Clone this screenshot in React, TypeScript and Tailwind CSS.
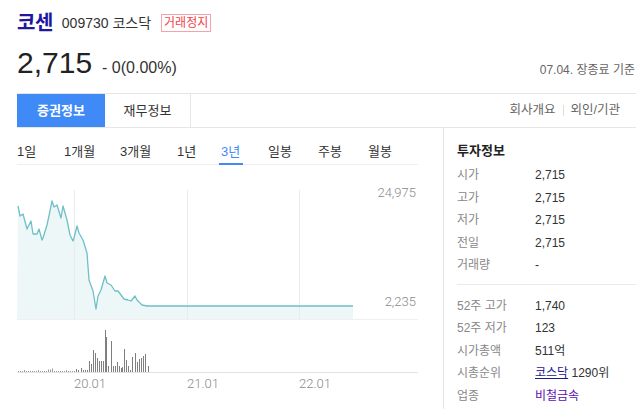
import React from 'react';

const linePts: [number, number][] = [
  [18, 208], [20, 218], [23, 216], [27, 231], [31, 223], [33, 236], [37, 236], [39, 231],
  [42, 242], [43, 240], [47, 227], [50, 213], [52, 203], [54, 209], [57, 207], [61, 220],
  [63, 208], [67, 222], [70, 237], [73, 243], [74, 240], [77, 228], [79, 235], [83, 242],
  [87, 255], [89, 282], [93, 293], [96, 311], [98, 298], [101, 292], [105, 278], [107, 285],
  [111, 287], [115, 293], [118, 293], [124, 301], [128, 302], [131, 303], [135, 298],
  [137, 302], [142, 307], [147, 308], [353, 308],
];

// x, height (zoomed reference / 3)
const volBars: [number, number][] = [
  [76, 3], [78, 2], [81, 4], [83, 2], [85, 2], [87, 2], [89, 11], [91, 8], [93, 22], [95, 19],
  [97, 14], [99, 11], [101, 11], [103, 11], [105, 42], [106, 35], [108, 6], [111, 31], [113, 6],
  [115, 6], [117, 10], [119, 6], [121, 4], [122, 5], [124, 23], [126, 12], [128, 6], [130, 2],
  [132, 15], [135, 19], [137, 10], [139, 13], [141, 14], [143, 16], [145, 18], [148, 6],
];

const tinyBars: number[] = [];
for (let x = 18; x < 75; x += 2) tinyBars.push(x);

const periods = [
  { label: '1일', cls: 'w-[47px]' },
  { label: '1개월', cls: 'w-[56px]' },
  { label: '3개월', cls: 'w-[57px]' },
  { label: '1년', cls: 'w-[44px]' },
  { label: '3년', cls: 'w-[47px]', active: true },
  { label: '일봉', cls: 'w-[50px]' },
  { label: '주봉', cls: 'w-[50px]' },
  { label: '월봉', cls: 'w-[50px]' },
];

function Chart() {
  const line = linePts.map(([x, y]) => `${x},${y}`).join(' ');
  const area = `17,321 ${line} 353,321`;
  return (
    <svg width={443} height={243} viewBox="0 167 443 243" className="block">
      <polygon points={area} fill="#eef7f7" />
      {[74, 187, 299].map((x) => (
        <line key={x} x1={x + 0.5} y1={192} x2={x + 0.5} y2={321} stroke="#e6eded" strokeWidth={1} />
      ))}
      <polyline points={line} fill="none" stroke="#6fbfc8" strokeWidth={1.3} strokeLinejoin="round" />
      <line x1={17} y1={321.5} x2={418} y2={321.5} stroke="#f0f0f0" />
      <text x={416} y={199} textAnchor="end" fontSize={13} fill="#8a8a8a" fontFamily="Roboto, sans-serif" fontWeight={300}>24,975</text>
      <text x={416} y={308} textAnchor="end" fontSize={13} fill="#8a8a8a" fontFamily="Roboto, sans-serif" fontWeight={300}>2,235</text>
      {tinyBars.map((x, i) => (
        <line key={'t' + x} x1={x + 0.5} y1={374} x2={x + 0.5} y2={374 - (i % 7 === 3 ? 2 : 1) - (x > 46 && x < 54 ? 1.5 : 0)} stroke="#9a9a9a" />
      ))}
      {volBars.map(([x, h]) => (
        <line key={'v' + x} x1={x + 0.5} y1={374} x2={x + 0.5} y2={374 - h} stroke="#7f7f7f" />
      ))}
      <line x1={17} y1={374.5} x2={418} y2={374.5} stroke="#e2e2e2" />
      {[
        [74, '20.01'],
        [187, '21.01'],
        [299, '22.01'],
      ].map(([x, t]) => (
        <text key={t as string} x={x as number} y={390} fontSize={13} fill="#8a8a8a" fontFamily="Roboto, sans-serif" fontWeight={300}>
          {t}
        </text>
      ))}
    </svg>
  );
}

function InfoRow({ label, children }: { label: string; children: React.ReactNode }) {
  return (
    <div className="flex h-[22.5px] items-center text-[12px]">
      <span className="w-[78px] text-[#888]">{label}</span>
      <span className="text-[#333]">{children}</span>
    </div>
  );
}

export default function App() {
  return (
    <div
      className="w-[636px] h-[410px] overflow-hidden bg-white text-[#333]"
      style={{ fontFamily: '"Liberation Sans", "Noto Sans CJK KR", sans-serif' }}
    >
      {/* 종목 헤더 */}
      <div className="pl-[17px] pt-[11px]">
        <div className="flex items-center h-[24px]">
          <span className="text-[20px] font-bold text-[#2016a0] tracking-[-0.5px]">코센</span>
          <span className="ml-[9px] text-[14px] text-[#333]">009730 코스닥</span>
          <span className="ml-[10px] h-[18px] px-[2px] border border-[#f5a3a6] text-[12px] leading-[16px] text-[#f2434a]">
            거래정지
          </span>
        </div>
        <div className="flex items-end mt-[9px] h-[34px]">
          <span className="text-[30px] leading-[30px] text-[#222]">2,715</span>
          <span className="ml-[10px] text-[16px] leading-[18px] text-[#333] mb-[1px]">- 0(0.00%)</span>
          <span className="ml-auto mr-[1px] text-[12px] text-[#666] mb-[-1px]">07.04. 장종료 기준</span>
        </div>
      </div>

      {/* 탭 */}
      <div className="ml-[17px] mt-[15px] flex h-[35px] border-t border-b border-[#e6e6e6]">
        <div className="w-[88px] bg-[#3f8af6] text-white font-bold text-[13px] flex items-center justify-center">
          증권정보
        </div>
        <div className="w-[86px] border-r border-[#e6e6e6] text-[13px] text-[#333] flex items-center justify-center">
          재무정보
        </div>
        <div className="ml-auto mr-[16px] flex items-center text-[12.5px] text-[#666]">
          <span>회사개요</span>
          <span className="mx-[7px] h-[11px] w-px bg-[#ddd]" />
          <span>외인/기관</span>
        </div>
      </div>

      <div className="flex">
        {/* 차트 */}
        <div className="w-[443px] pl-[17px]">
          <div className="flex h-[37px] w-[401px] pt-[12px] border-b border-[#eeeeee]">
            {periods.map((p) => (
              <div key={p.label} className={`${p.cls} relative flex items-center text-[13px]`}>
                <span className={p.active ? 'text-[#3f8af6]' : 'text-[#333]'}>{p.label}</span>
                {p.active && <span className="absolute left-[-2px] bottom-[-1px] h-[2px] w-[24px] bg-[#3f8af6]" />}
              </div>
            ))}
          </div>
          <div className="ml-[-17px]">
            <Chart />
          </div>
        </div>

        {/* 투자정보 */}
        <div className="flex-1 border-l border-[#e6e6e6] pl-[13px] pt-[14px] h-[281px]">
          <div className="text-[13px] font-bold text-[#222] h-[18px] leading-[18px]">투자정보</div>
          <div className="mt-[4px]">
            <InfoRow label="시가">2,715</InfoRow>
            <InfoRow label="고가">2,715</InfoRow>
            <InfoRow label="저가">2,715</InfoRow>
            <InfoRow label="전일">2,715</InfoRow>
            <InfoRow label="거래량">-</InfoRow>
          </div>
          <div className="mt-[7px] border-t border-[#eaeaea]" />
          <div className="mt-[10px]">
            <InfoRow label="52주 고가">1,740</InfoRow>
            <InfoRow label="52주 저가">123</InfoRow>
            <InfoRow label="시가총액">511억</InfoRow>
            <InfoRow label="시총순위">
              <span className="underline text-[#1a1a8c]">코스닥</span> 1290위
            </InfoRow>
            <InfoRow label="업종">
              <span className="text-[#5a0fb0]">비철금속</span>
            </InfoRow>
          </div>
        </div>
      </div>
    </div>
  );
}
